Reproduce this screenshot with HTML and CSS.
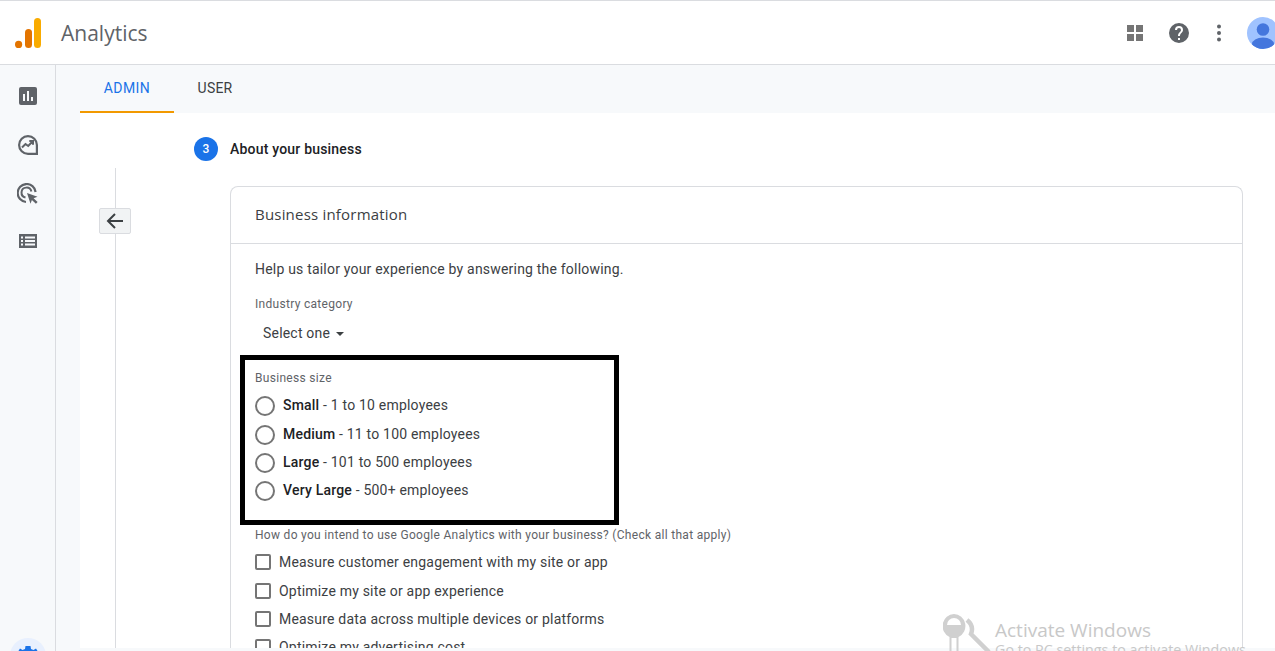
FILE: index.html
```html
<!DOCTYPE html>
<html lang="en">
<head>
<meta charset="utf-8">
<title>Analytics</title>
<link rel="stylesheet" href="styles.css">
</head>
<body>
<header class="topbar">
  <svg class="logo" viewBox="0 0 27 30" width="27" height="30">
    <circle cx="3.6" cy="26.4" r="3.6" fill="#e37400"/>
    <rect x="10" y="11" width="7" height="19" rx="3.5" fill="#e37400"/>
    <rect x="19" y="0" width="7" height="30" rx="3.5" fill="#f9ab00"/>
  </svg>
  <span class="brand">Analytics</span>
  <div class="top-actions">
    <svg class="ico-grid" viewBox="0 0 16 16" width="16" height="16"><path fill="#757575" d="M0 0h7v7H0zM9 0h7v7H9zM0 9h7v7H0zM9 9h7v7H9z"/></svg>
    <svg class="ico-help" viewBox="0 0 24 24" width="24" height="24"><path fill="#5f6368" d="M12 2a10 10 0 1 0 0 20 10 10 0 0 0 0-20zm1 17h-2v-2h2v2zm2.07-7.75-.9.92C13.45 12.9 13 13.5 13 15h-2v-.5c0-1.1.45-2.1 1.17-2.83l1.24-1.26c.37-.36.59-.86.59-1.41a2 2 0 0 0-4 0H8a4 4 0 0 1 8 0c0 .88-.36 1.68-.93 2.25z"/></svg>
    <svg class="ico-more" viewBox="0 0 6 20" width="6" height="20"><g fill="#5f6368"><circle cx="3" cy="3.5" r="2"/><circle cx="3" cy="10" r="2"/><circle cx="3" cy="16.5" r="2"/></g></svg>
    <svg class="avatar" viewBox="0 0 32 32" width="32" height="32"><defs><clipPath id="av"><circle cx="16" cy="16" r="16"/></clipPath></defs><circle cx="16" cy="16" r="16" fill="#a0c3ff"/><g clip-path="url(#av)" fill="#4476dd"><circle cx="16" cy="12.5" r="6.3"/><ellipse cx="16" cy="27" rx="11" ry="6.5"/></g></svg>
  </div>
</header>
<div class="shell">
  <nav class="rail">
    <svg class="rail-ico" viewBox="0 0 18 18" width="18" height="18"><rect width="18" height="18" rx="2" fill="#5f6368"/><path fill="#f7f9fb" d="M4 7h2v7H4zM8 4h2v10H8zM12 10h2v4h-2z"/></svg>
    <svg class="rail-ico" viewBox="0 0 20 20" width="20" height="20"><path fill="none" stroke="#5f6368" stroke-width="2.200" d="M18.900 18.900H10A8.900 8.900 0 1 1 18.900 10z"/><path fill="none" stroke="#5f6368" stroke-width="2" d="M4 12.500l3.500-3.500 2.700 2 4.300-4.500M11.300 6h3.700v3.700"/></svg>
    <svg class="rail-ico" viewBox="0 0 21 21" width="21" height="21"><path fill="none" stroke="#5f6368" stroke-width="2.200" d="M9 19a9 9 0 1 1 9.600-10"/><path fill="none" stroke="#5f6368" stroke-width="2" d="M8.500 14.500a5 5 0 1 1 5.900-6"/><path fill="#5f6368" d="M10 10l10.500 3.700-3.900 1.500 4 3.900-1.700 1.700-4-3.900-1.400 3.800z"/></svg>
    <svg class="rail-ico" viewBox="0 0 18 14" width="18" height="14"><path fill="#5f6368" d="M0 0h18v14H0z"/><path fill="#f7f9fb" d="M2 2.500h2v2H2zM6 2.500h10v2H6zM2 6h2v2H2zM6 6h10v2H6zM2 9.500h2v2H2zM6 9.500h10v2H6z"/></svg>
    <div class="rail-foot">
      <svg viewBox="0 0 36 36" width="36" height="36"><circle cx="18" cy="18" r="18" fill="#e8f0fe"/><path fill="#1a73e8" d="M15.500 8h5l.5 3 2.500 1 2.500-1.500 2.500 4-2.300 2v3l2.300 2-2.500 4-2.500-1.500-2.500 1-.5 3h-5l-.5-3-2.500-1-2.500 1.500-2.500-4 2.300-2v-3l-2.300-2 2.500-4 2.500 1.500 2.500-1z"/></svg>
    </div>
  </nav>
  <main class="content">
    <div class="tabs">
      <a class="tab tab-active">ADMIN</a>
      <a class="tab">USER</a>
    </div>
    <section class="panel">
      <div class="stepper-col">
        <div class="step-line"></div>
        <button class="back" aria-label="Back">
          <svg viewBox="0 0 18 16" width="18" height="16"><path fill="none" stroke="#3c4043" stroke-width="2" d="M17 8H2M9 1L2 8l7 7"/></svg>
        </button>
      </div>
      <div class="step-col">
        <div class="step-head">
          <span class="step-num">3</span>
          <span class="step-title">About your business</span>
        </div>
        <div class="card">
          <div class="card-head">Business information</div>
          <div class="card-body">
            <p class="lead">Help us tailor your experience by answering the following.</p>
            <div class="field-label">Industry category</div>
            <div class="select">Select one <span class="caret"></span></div>
            <div class="highlight">
              <div class="field-label">Business size</div>
              <div class="radio-list">
                <div class="radio-row"><span class="radio"></span><span><b>Small</b> - 1 to 10 employees</span></div>
                <div class="radio-row"><span class="radio"></span><span><b>Medium</b> - 11 to 100 employees</span></div>
                <div class="radio-row"><span class="radio"></span><span><b>Large</b> - 101 to 500 employees</span></div>
                <div class="radio-row"><span class="radio"></span><span><b>Very Large</b> - 500+ employees</span></div>
              </div>
            </div>
            <div class="field-label intent">How do you intend to use Google Analytics with your business? (Check all that apply)</div>
            <div class="check-row"><span class="check"></span>Measure customer engagement with my site or app</div>
            <div class="check-row"><span class="check"></span>Optimize my site or app experience</div>
            <div class="check-row"><span class="check"></span>Measure data across multiple devices or platforms</div>
            <div class="check-row"><span class="check"></span>Optimize my advertising cost</div>
          </div>
        </div>
      </div>
    </section>
  </main>
</div>
<aside class="watermark">
  <svg viewBox="0 0 48 37" width="48" height="37"><path fill="#d0d0d0" d="M11 0a11.500 12 0 0 1 4.500 23v14h-2V24h-5v13h-2V23A11.500 12 0 0 1 11 0z"/><path fill="#fff" d="M4 11a7 7 0 0 1 14 0z"/><path fill="none" stroke="#d0d0d0" stroke-width="4.500" d="M24 6c5 4 6 9 4 14l18 18"/></svg>
  <div class="wm-text">
    <div class="wm-title">Activate Windows</div>
    <div class="wm-sub">Go to PC settings to activate Windows.</div>
  </div>
</aside>
</body>
</html>
```
FILE: styles.css
```css
* { box-sizing: border-box; }
html, body { margin: 0; height: 651px; overflow: hidden; }
body {
  position: relative;
  display: flex;
  flex-direction: column;
  font-family: Roboto, "Liberation Sans", sans-serif;
  color: #3c4043;
  background: #f7f9fb;
}
.topbar {
  height: 65px;
  flex: none;
  display: flex;
  align-items: center;
  background: #fff;
  border-top: 1px solid #dadce0;
  border-bottom: 1px solid #dadce0;
  padding-left: 15px;
}
.logo { margin-top: 1px; }
.brand {
  margin-left: 19px;
  font-family: "Open Sans", Roboto, sans-serif;
  font-size: 21px;
  color: #5f6368;
}
.top-actions {
  margin-left: auto;
  display: flex;
  align-items: center;
  margin-right: -4px;
}
.ico-grid { margin-right: 24px; margin-top: 1px; }
.ico-help { margin-right: 25px; margin-top: 1px; }
.ico-more { margin-right: 25px; margin-top: 1px; }
.avatar { display: block; }
.shell { flex: 1; display: flex; min-height: 0; padding-bottom: 3px; }
.rail {
  width: 56px;
  flex: none;
  margin-bottom: -3px;
  border-right: 1px solid #dadce0;
  display: flex;
  flex-direction: column;
  align-items: center;
  padding-top: 22px;
}
.rail-ico { display: block; margin-bottom: 30px; }
.rail-ico:nth-child(2) { margin-bottom: 28px; }
.rail-foot { margin-top: auto; height: 13px; overflow: hidden; }
.rail-foot svg { display: block; }
.content { flex: 1; min-width: 0; padding-left: 24px; display: flex; flex-direction: column; }
.tabs { height: 48px; flex: none; display: flex; }
.tab {
  width: 94px;
  display: flex;
  align-items: center;
  justify-content: center;
  font-size: 14px;
  letter-spacing: 0.2px;
  padding-bottom: 2px;
  color: #3c4043;
}
.tab:nth-child(2) { width: 82px; }
.tab-active {
  color: #1a73e8;
  letter-spacing: 0.4px;
  border-bottom: 2px solid #f29900;
  padding-bottom: 0;
}
.panel { flex: 1; min-height: 0; background: #fff; display: flex; overflow: hidden; }
.stepper-col {
  width: 114px;
  flex: none;
  position: relative;
  padding-top: 55px;
  display: flex;
  justify-content: center;
  padding-right: 44px;
}
.step-line { width: 1px; background: #dadce0; }
.back {
  position: absolute;
  left: 19px;
  top: 95px;
  width: 32px;
  height: 26px;
  padding: 0;
  display: flex;
  align-items: center;
  justify-content: center;
  background: #f1f3f4;
  border: 1px solid #dadce0;
  border-radius: 2px;
}
.step-col { flex: 1; min-width: 0; padding-right: 32px; }
.step-head { display: flex; align-items: center; height: 24px; margin-top: 24px; }
.step-num {
  width: 24px;
  height: 24px;
  border-radius: 50%;
  background: #1a73e8;
  color: #fff;
  font-size: 12px;
  font-weight: 500;
  display: flex;
  align-items: center;
  justify-content: center;
  margin-right: 12px;
}
.step-title { font-size: 14px; font-weight: 500; letter-spacing: 0.2px; color: #202124; }
.card {
  margin: 25px 0 0 36px;
  border: 1px solid #dadce0;
  border-bottom: 0;
  border-radius: 8px 8px 0 0;
  height: 700px;
}
.card-head {
  height: 57px;
  padding: 0 24px 2px;
  display: flex;
  align-items: center;
  border-bottom: 1px solid #dadce0;
  font-family: "Open Sans", Roboto, sans-serif;
  font-size: 15px;
  letter-spacing: 0.2px;
  color: #3c4043;
}
.card-body { padding: 15px 24px; font-size: 14px; letter-spacing: 0.2px; }
.lead { margin: 0; line-height: 20px; color: #3c4043; }
.field-label { font-size: 12px; line-height: 16px; letter-spacing: 0.3px; color: #5f6368; }
.card-body > .field-label:nth-child(2) { margin-top: 17px; }
.select { margin: 11px 0 0 8px; line-height: 20px; color: #3c4043; }
.caret {
  display: inline-block;
  vertical-align: middle;
  margin-left: 2px;
  border: 4px solid transparent;
  border-top-color: #3c4043;
  border-bottom: 0;
}
.highlight {
  margin: 12px 0 0 -15px;
  width: 379px;
  height: 170px;
  border: 5px solid #000;
  padding: 10px 10px 0;
}
.radio-list { margin-top: 5px; }
.radio-row { display: flex; align-items: center; height: 28.4px; color: #3c4043; }
.radio-row b { font-weight: 500; color: #202124; }
.radio {
  width: 20px;
  height: 20px;
  border: 2px solid #757575;
  border-radius: 50%;
  margin-top: 2px;
  margin-right: 8px;
  flex: none;
}
.field-label.intent { margin-top: 2px; }
.check-row { display: flex; align-items: center; height: 28.4px; color: #3c4043; }
.intent + .check-row { margin-top: 5px; }
.check {
  width: 16px;
  height: 16px;
  border: 2px solid #757575;
  border-radius: 2px;
  margin-right: 8px;
  flex: none;
}
.watermark {
  position: absolute;
  left: 943px;
  top: 614px;
  display: flex;
  align-items: flex-start;
  pointer-events: none;
}
.wm-text { margin-left: 4px; font-family: "Open Sans", sans-serif; color: #c8c8c8; }
.wm-title { font-size: 19px; line-height: 26px; margin-top: 3px; }
.wm-sub { font-size: 14.3px; line-height: 14px; white-space: nowrap; }
```
